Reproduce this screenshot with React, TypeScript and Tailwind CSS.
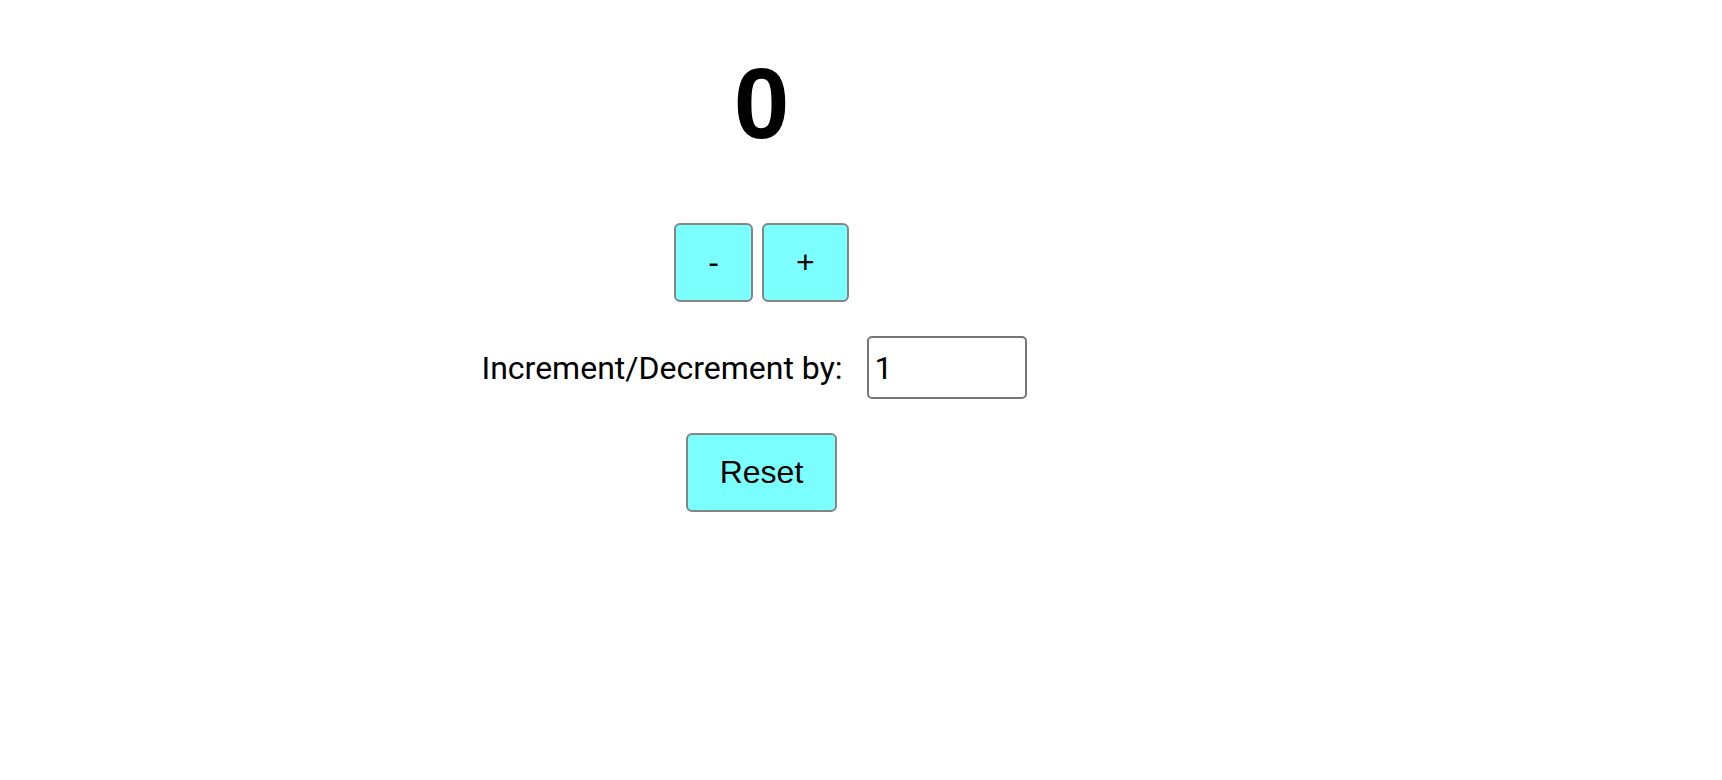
import { useState } from "react"

export default function App() {
  const [count, setCount] = useState(0)
  const [step, setStep] = useState("1")

  const amount = Number(step) || 0

  return (
    <div className="min-h-screen bg-white">
      <div className="flex w-[1523px] flex-col items-center pt-[46px]">
        <h1 className="font-['Liberation_Sans',Arial,sans-serif] text-[100px] font-bold leading-[115px] text-black">
          {count}
        </h1>

        <div className="mt-[62px] flex gap-[9px]">
          <button
            onClick={() => setCount(count - amount)}
            className="h-[79px] rounded-[6px] border-2 border-[#858585] bg-[#7bffff] px-[32px] font-['Liberation_Sans',Arial,sans-serif] text-[32px] leading-[37px] text-black"
          >
            -
          </button>
          <button
            onClick={() => setCount(count + amount)}
            className="h-[79px] rounded-[6px] border-2 border-[#858585] bg-[#7bffff] px-[32px] font-['Liberation_Sans',Arial,sans-serif] text-[32px] leading-[37px] text-black"
          >
            +
          </button>
        </div>

        <div className="mt-[34px] flex items-center gap-[24px] pr-[15px]">
          <label className="font-['Roboto',sans-serif] text-[32px] text-black">Increment/Decrement by:</label>
          <input
            type="number"
            value={step}
            onChange={(e) => setStep(e.target.value)}
            className="h-[63px] w-[160px] rounded-[5px] border-2 border-[#767676] bg-white pl-[6px] font-['Roboto',sans-serif] text-[32px] text-black outline-none [appearance:textfield] [&::-webkit-inner-spin-button]:appearance-none [&::-webkit-outer-spin-button]:appearance-none"
          />
        </div>

        <button
          onClick={() => setCount(0)}
          className="mt-[34px] h-[79px] rounded-[6px] border-2 border-[#858585] bg-[#7bffff] px-[32px] font-['Liberation_Sans',Arial,sans-serif] text-[32px] leading-[37px] text-black"
        >
          Reset
        </button>
      </div>
    </div>
  )
}
